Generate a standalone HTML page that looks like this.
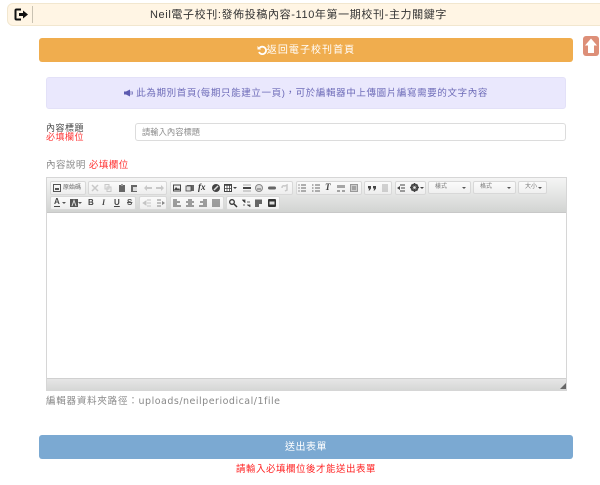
<!DOCTYPE html>
<html><head><meta charset="utf-8">
<style>
html,body{margin:0;padding:0;width:600px;height:485px;overflow:hidden;background:#fff}
body{font-family:"WenQuanYi Zen Hei","Liberation Sans","Noto Sans CJK TC",sans-serif;position:relative}
.a{position:absolute;box-sizing:border-box;white-space:nowrap}
.g{position:absolute;box-sizing:border-box;height:14px;border:1px solid #d8d8d8;border-radius:2px;background:linear-gradient(#fbfbfb,#eeeeee)}
.i{position:absolute;width:8px;height:8px;overflow:visible}
.s{position:absolute;box-sizing:border-box;height:13px;top:181px;border:1px solid #d8d8d8;border-radius:2px;background:linear-gradient(#fbfbfb,#f0f0f0);font-size:6px;line-height:11px;color:#777;padding-left:6px}
.s:after{content:"";position:absolute;right:4px;top:5px;border:2px solid transparent;border-top:2px solid #555}
</style></head><body>
<div class="a" style="left:7px;top:3px;width:610px;height:23px;background:#fff5e4;border:1px solid #f2e7cf;border-radius:6px"></div>
<svg class="a" style="left:14px;top:8px;width:15px;height:13px" viewBox="0 0 15 13"><path d="M7 1.500H2.500Q1.500 1.500 1.500 2.500V10.500Q1.500 11.500 2.500 11.500H7" fill="none" stroke="#111" stroke-width="2"/><path d="M5 5H9V2.500L14 6.500L9 10.500V8H5Z" fill="#111"/></svg>
<div class="a" style="left:32px;top:6px;width:1px;height:17px;background:#c9c2b2"></div>
<div class="a" style="left:0;top:7px;width:597px;text-align:center;font-size:11px;line-height:17px;letter-spacing:.62px;color:#333">Neil電子校刊:發佈投稿內容-110年第一期校刊-主力關鍵字</div>

<div class="a" style="left:39px;top:38px;width:534px;height:24px;background:#f0ad4e;border-radius:3px;color:#fff;font-size:10px;line-height:25px;text-align:center;letter-spacing:1.05px"><svg style="width:10px;height:10px;vertical-align:-1.500px" viewBox="0 0 10 10"><path d="M2.500 3A3.700 3.700 0 1 1 2 7" fill="none" stroke="#fff" stroke-width="1.800"/><path d="M0.500 1V4.500H4Z" fill="#fff"/></svg>返回電子校刊首頁</div>
<svg class="a" style="left:583px;top:36px;width:16px;height:20px" viewBox="0 0 16 20"><rect width="16" height="20" rx="3" fill="#dd8f78"/><path d="M8 2.500L14 9.500H11V17H5V9.500H2Z" fill="#fff"/></svg>

<div class="a" style="left:46px;top:77px;width:520px;height:32px;background:#eae8fd;border:1px solid #e3e1f8;border-radius:3px;color:#6d6bb8;font-size:9.500px;line-height:31px;text-align:center;letter-spacing:.62px"><svg style="width:9px;height:8px;vertical-align:-.5px" viewBox="0 0 9 8"><path d="M0 2.500H2L6 .5V7.500L2 5.500H0Z" fill="#5c5ab0"/><path d="M7 2V6M8.500 2.500V5.500" stroke="#8d8bc8"/></svg>&nbsp;此為期別首頁(每期只能建立一頁)，可於編輯器中上傳圖片編寫需要的文字內容</div>

<div class="a" style="left:46px;top:123px;font-size:9px;line-height:10px;color:#444;letter-spacing:.5px">內容標題</div>
<div class="a" style="left:46px;top:132px;font-size:9px;line-height:10px;color:#f33;letter-spacing:.5px">必填欄位</div>
<div class="a" style="left:135px;top:123px;width:431px;height:18px;border:1px solid #dcdcdc;border-radius:3px;font-size:8.300px;line-height:17px;color:#8c8c8c;padding-left:6px">請輸入內容標題</div>
<div class="a" style="left:46px;top:159px;font-size:9.500px;line-height:13px;color:#8a8a8a;letter-spacing:.45px">內容說明 <span style="color:#f33">必填欄位</span></div>

<div class="a" style="left:46px;top:177px;width:521px;height:214px;border:1px solid #d6d6d6;background:#fff"></div>
<div class="a" style="left:47px;top:178px;width:519px;height:35px;background:linear-gradient(#f5f5f5,#d2d4d2);border-bottom:1px solid #c8c8c8"></div>

<div class="g" style="left:50px;top:181px;width:36px"></div>
<svg class="i" style="left:53px;top:184px"><rect x=".5" y=".5" width="7" height="7" fill="none" stroke="#555"/><rect x="2" y="4" width="4" height="2" fill="#555"/></svg>
<div class="a" style="left:63px;top:184px;font-size:6px;line-height:8px;color:#666">原始碼</div>

<div class="g" style="left:88px;top:181px;width:79px"></div>
<svg class="i" style="left:91px;top:184px"><path d="M1 1L7 7M7 1L1 7" stroke="#c8c8c8" stroke-width="1.500"/></svg>
<svg class="i" style="left:104px;top:184px"><path d="M1 .5H5V5H1ZM3 3H7V7.500H3Z" fill="#f2f2f2" stroke="#c8c8c8"/></svg>
<svg class="i" style="left:118px;top:184px"><rect x="1" y="1" width="6" height="7" fill="#666"/><rect x="3" y="0" width="2" height="2" fill="#999"/></svg>
<svg class="i" style="left:130px;top:184px"><rect x="1" y="1" width="6" height="7" fill="#666"/><rect x="3" y="3" width="4" height="4" fill="#ddd"/></svg>
<svg class="i" style="left:144px;top:184px"><path d="M0 4L3 1V3H8V5H3V7Z" fill="#c8c8c8"/></svg>
<svg class="i" style="left:156px;top:184px"><path d="M8 4L5 1V3H0V5H5V7Z" fill="#c8c8c8"/></svg>

<div class="g" style="left:170px;top:181px;width:123px"></div>
<svg class="i" style="left:173px;top:184px"><rect x=".5" y="1" width="7" height="6" fill="#eee" stroke="#444"/><path d="M1 6L3 3L5 5L6 4L7 6Z" fill="#444"/></svg>
<svg class="i" style="left:186px;top:184px"><rect x="1" y="1" width="7" height="6" fill="#666"/><rect x="0" y="2" width="5" height="5" fill="#ddd" stroke="#444" stroke-width=".8"/></svg>
<div class="a" style="left:198px;top:182px;font:italic bold 9px/11px 'Liberation Serif',serif;color:#333">fx</div>
<svg class="i" style="left:212px;top:184px"><circle cx="4" cy="4" r="4" fill="#444"/><path d="M2 6L6 2" stroke="#ddd" stroke-width="1.500"/></svg>
<svg class="i" style="left:224px;top:184px"><rect x=".5" y=".5" width="7" height="7" fill="#fff" stroke="#444"/><path d="M0 1.500H8M3 1V8M5.500 1V8M0 4.500H8" stroke="#444" stroke-width=".8"/></svg>
<div class="a" style="left:233px;top:187px;border:2px solid transparent;border-top:2px solid #444"></div>
<svg class="i" style="left:243px;top:184px"><path d="M0 1H8M0 7H8" stroke="#aaa"/><rect x="0" y="3" width="8" height="2" fill="#444"/></svg>
<svg class="i" style="left:255px;top:184px"><circle cx="4" cy="4" r="3.500" fill="#ddd" stroke="#888"/><path d="M2 5H6" stroke="#666"/></svg>
<svg class="i" style="left:268px;top:184px"><rect x="0" y="2.500" width="8" height="3" rx="1.500" fill="#666"/></svg>
<svg class="i" style="left:281px;top:184px"><path d="M1 4Q1 1 4 2L6 1V6L4 7" fill="none" stroke="#c8c8c8" stroke-width="1.500"/></svg>

<div class="g" style="left:296px;top:181px;width:66px"></div>
<svg class="i" style="left:298px;top:184px"><path d="M3 1H8M3 4H8M3 7H8" stroke="#666"/><path d="M0 1H2M0 4H2M0 7H2" stroke="#999"/></svg>
<svg class="i" style="left:312px;top:184px"><path d="M3 1H8M3 4H8M3 7H8M0 1H1.500M0 4H1.500M0 7H1.500" stroke="#666"/></svg>
<div class="a" style="left:325px;top:182px;font:italic bold 9px/11px 'Liberation Serif',serif;color:#444">T</div>
<svg class="i" style="left:337px;top:184px"><path d="M1 1V4M3 1V4M5 1V4M7 1V4M0 7H3M5 7H8" stroke="#555"/></svg>
<svg class="i" style="left:350px;top:184px"><rect x=".5" y=".5" width="7" height="7" fill="#ccc" stroke="#999"/><path d="M2 3H6M2 5H6" stroke="#777"/></svg>

<div class="g" style="left:364px;top:181px;width:28px"></div>
<svg class="i" style="left:368px;top:184px"><path d="M0 2H3V4.500L1.500 6.500H.5L1.300 4.500H0ZM5 2H8V4.500L6.500 6.500H5.500L6.300 4.500H5Z" fill="#444"/></svg>
<svg class="i" style="left:381px;top:184px"><path d="M1 1H7M1 3H7M1 5H7M1 7H7" stroke="#aaa"/></svg>

<div class="g" style="left:395px;top:181px;width:31px"></div>
<svg class="i" style="left:397px;top:184px"><path d="M0 4L3 2V6Z" fill="#444"/><path d="M3 1H8M4 4H8M3 7H8" stroke="#444"/></svg>
<svg class="i" style="left:410px;top:183px;width:9px;height:9px"><circle cx="4.500" cy="4.500" r="3" fill="none" stroke="#444" stroke-width="2"/><path d="M4.500 0V9M0 4.500H9M1.500 1.500L7.500 7.500M7.500 1.500L1.500 7.500" stroke="#444"/><circle cx="4.500" cy="4.500" r="1.300" fill="#e8e8e8"/></svg>
<div class="a" style="left:420px;top:187px;border:2px solid transparent;border-top:2px solid #444"></div>

<div class="s" style="left:428px;width:43px">樣式</div>
<div class="s" style="left:473px;width:43px">格式</div>
<div class="s" style="left:518px;width:29px">大小</div>

<div class="g" style="left:50px;top:196px;width:86px"></div>
<div class="a" style="left:54px;top:197px;font:bold 8px/10px 'Liberation Sans',sans-serif;color:#444;border-bottom:1px solid #444;height:10px">A</div>
<div class="a" style="left:62px;top:202px;border:2px solid transparent;border-top:2px solid #555"></div>
<svg class="i" style="left:70px;top:199px"><rect width="8" height="8" fill="#555"/><path d="M2 7L4 1.500L6 7" stroke="#ddd" fill="none"/></svg>
<div class="a" style="left:78px;top:202px;border:2px solid transparent;border-top:2px solid #555"></div>
<div class="a" style="left:88px;top:197px;font:bold 8px/12px 'Liberation Sans',sans-serif;color:#444">B</div>
<div class="a" style="left:102px;top:197px;font:italic bold 8px/12px 'Liberation Serif',serif;color:#444">I</div>
<div class="a" style="left:114px;top:197px;font:bold 8px/12px 'Liberation Sans',sans-serif;color:#444;text-decoration:underline">U</div>
<div class="a" style="left:127px;top:197px;font:bold 8px/12px 'Liberation Sans',sans-serif;color:#555;text-decoration:line-through">S</div>

<div class="g" style="left:139px;top:196px;width:28px"></div>
<svg class="i" style="left:143px;top:199px"><path d="M4 1H8M4 4H8M4 7H8M0 4L3 2V6Z" stroke="#c4c4c4" fill="#c4c4c4" stroke-width=".9"/></svg>
<svg class="i" style="left:157px;top:199px"><path d="M0 1H4M0 4H4M0 7H4" stroke="#888"/><path d="M8 4L5 2V6Z" fill="#888"/></svg>

<div class="g" style="left:170px;top:196px;width:54px"></div>
<svg class="i" style="left:173px;top:199px"><path d="M0 1H4M0 3H7M0 5H4M0 7H8" stroke="#444"/></svg>
<svg class="i" style="left:186px;top:199px"><path d="M2 1H6M0 3H8M2 5H6M0 7H8" stroke="#444"/></svg>
<svg class="i" style="left:199px;top:199px"><path d="M4 1H8M1 3H8M4 5H8M0 7H8" stroke="#444"/></svg>
<svg class="i" style="left:212px;top:199px"><path d="M0 1H8M0 3H8M0 5H8M0 7H8" stroke="#444"/></svg>

<div class="g" style="left:226px;top:196px;width:54px"></div>
<svg class="i" style="left:229px;top:199px"><circle cx="3" cy="3" r="2.300" fill="none" stroke="#333" stroke-width="1.300"/><path d="M5 5L8 8" stroke="#333" stroke-width="1.500"/></svg>
<svg class="i" style="left:242px;top:199px"><path d="M0 1H3V4M5 3H8M5 6H8V8M1 6H3" stroke="#666"/></svg>
<svg class="i" style="left:255px;top:199px"><path d="M0 .5H7V5H4V8H0Z" fill="#666"/></svg>
<svg class="i" style="left:268px;top:199px"><rect width="8" height="8" rx="1" fill="#333"/><rect x="1.500" y="2.500" width="5" height="3" fill="#ddd"/></svg>

<div class="a" style="left:47px;top:378px;width:519px;height:12px;background:linear-gradient(#e6e6e6,#d6d7d6);border-top:1px solid #d0d0d0"></div>
<svg class="a" style="left:560px;top:383px;width:6px;height:6px" viewBox="0 0 6 6"><path d="M6 0V6H0Z" fill="#666"/></svg>

<div class="a" style="left:46px;top:395px;font-size:9.500px;line-height:14px;color:#888;letter-spacing:.78px">編輯器資料夾路徑：<span style="font-family:'DejaVu Sans',sans-serif;letter-spacing:.5px">uploads/neilperiodical/1file</span></div>

<div class="a" style="left:39px;top:435px;width:534px;height:24px;background:#7ba9d2;border-radius:3px;color:#fff;font-size:10px;line-height:25px;text-align:center;letter-spacing:.5px">送出表單</div>
<div class="a" style="left:0;top:464px;width:612px;text-align:center;font-size:9.500px;line-height:12px;color:#f22;letter-spacing:.5px">請輸入必填欄位後才能送出表單</div>
</body></html>
